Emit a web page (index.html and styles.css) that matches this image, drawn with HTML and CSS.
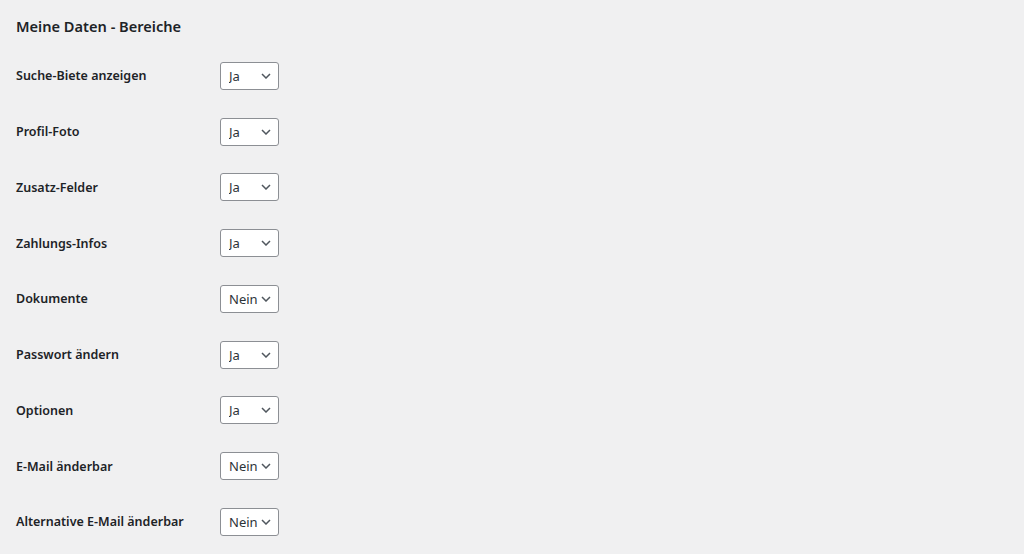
FILE: index.html
```html
<!DOCTYPE html>
<html lang="de">
<head>
  <meta charset="UTF-8">
  <meta name="viewport" content="width=device-width, initial-scale=1.0">
  <title>Meine Daten - Bereiche</title>
  <link rel="stylesheet" href="styles.css">
</head>
<body>
  <div class="wrap">
    <h2 class="section-title">Meine Daten - Bereiche</h2>
    <div class="form-table">
      <div class="row">
        <label for="f1">Suche-Biete anzeigen</label>
        <select id="f1"><option>Ja</option><option>Nein</option></select>
      </div>
      <div class="row">
        <label for="f2">Profil-Foto</label>
        <select id="f2"><option>Ja</option><option>Nein</option></select>
      </div>
      <div class="row">
        <label for="f3">Zusatz-Felder</label>
        <select id="f3"><option>Ja</option><option>Nein</option></select>
      </div>
      <div class="row">
        <label for="f4">Zahlungs-Infos</label>
        <select id="f4"><option>Ja</option><option>Nein</option></select>
      </div>
      <div class="row">
        <label for="f5">Dokumente</label>
        <select id="f5"><option>Ja</option><option selected>Nein</option></select>
      </div>
      <div class="row">
        <label for="f6">Passwort ändern</label>
        <select id="f6"><option>Ja</option><option>Nein</option></select>
      </div>
      <div class="row">
        <label for="f7">Optionen</label>
        <select id="f7"><option>Ja</option><option>Nein</option></select>
      </div>
      <div class="row">
        <label for="f8">E-Mail änderbar</label>
        <select id="f8"><option>Ja</option><option selected>Nein</option></select>
      </div>
      <div class="row">
        <label for="f9">Alternative E-Mail änderbar</label>
        <select id="f9"><option>Ja</option><option selected>Nein</option></select>
      </div>
    </div>
  </div>
</body>
</html>
```

FILE: styles.css
```css
body {
  margin: 0;
  background-color: #f0f0f1;
  color: #1d2327;
  font-family: "Noto Sans", "Open Sans", sans-serif;
}
.wrap {
  padding: 14px 16px 0 16px;
}
.section-title {
  margin: 0;
  height: 34px;
  font-size: 14.6px;
  font-weight: 600;
  line-height: 24px;
}
.form-table {
  display: flex;
  flex-direction: column;
}
.row {
  display: grid;
  grid-template-columns: 204px auto;
  align-items: center;
  height: 55.75px;
}
.row label {
  font-size: 12.5px;
  font-weight: 600;
}
.row select {
  -webkit-appearance: none;
  appearance: none;
  width: 59px;
  height: 28px;
  padding: 0 18px 0 8px;
  border: 1px solid #8c8f94;
  border-radius: 3px;
  background: #fff url('data:image/svg+xml;utf8,<svg xmlns="http://www.w3.org/2000/svg" width="10" height="6" viewBox="0 0 10 6"><path d="M1 1l4 4 4-4" fill="none" stroke="%2350575e" stroke-width="1.5"/></svg>') no-repeat right 7px center;
  color: #2c3338;
  font-family: "Noto Sans", "Open Sans", sans-serif;
  font-size: 13px;
}
```
